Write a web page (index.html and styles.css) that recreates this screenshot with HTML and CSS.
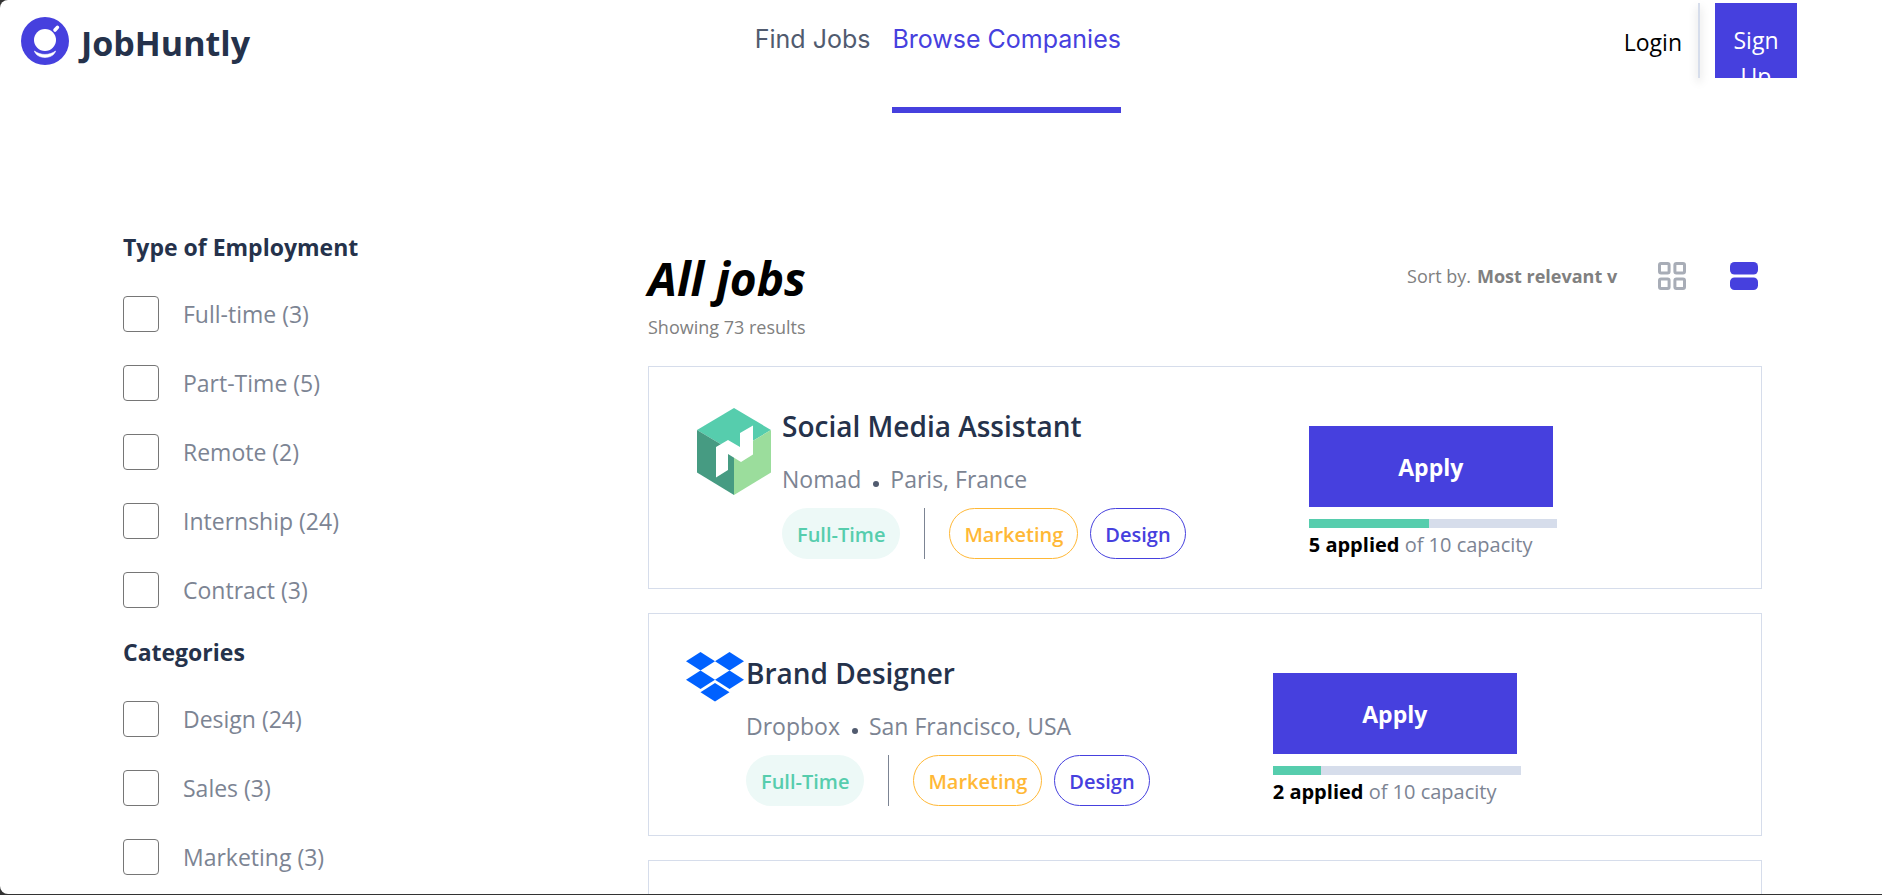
FILE: index.html
```html
<!DOCTYPE html>
<html lang="en">
<head>
<meta charset="utf-8">
<title>JobHuntly</title>
<meta name="viewport" content="width=device-width, initial-scale=1">
<link rel="stylesheet" href="styles.css">
</head>
<body>
<div class="page">
  <header class="header">
    <a class="brand" href="#">
      <svg class="brand-mark" viewBox="0 0 48 48" aria-hidden="true">
        <circle cx="24" cy="24" r="24" fill="#4640de"/>
        <circle cx="24" cy="23" r="11" fill="#fff"/>
        <path d="M34 13L36.400 10.400" stroke="#fff" stroke-width="3.600" stroke-linecap="round"/>
        <path d="M13.400 34C19.500 38.600 28.500 38.600 34.600 34C32 42.600 16 42.600 13.400 34Z" fill="#fff" stroke="#fff" stroke-width=".6" stroke-linejoin="round"/>
      </svg>
      <span class="brand-name">JobHuntly</span>
    </a>
    <nav class="nav">
      <a class="nav-link" href="#">Find Jobs</a>
      <a class="nav-link nav-link-active" href="#">Browse Companies</a>
    </nav>
    <div class="account">
      <a class="login" href="#">Login</a>
      <span class="account-divider"></span>
      <a class="signup" href="#">Sign Up</a>
    </div>
  </header>

  <div class="layout">
    <aside class="filters">
      <fieldset class="filter-group">
        <legend class="filter-title">Type of Employment</legend>
        <label class="option"><input class="option-box" type="checkbox">Full-time (3)</label>
        <label class="option"><input class="option-box" type="checkbox">Part-Time (5)</label>
        <label class="option"><input class="option-box" type="checkbox">Remote (2)</label>
        <label class="option"><input class="option-box" type="checkbox">Internship (24)</label>
        <label class="option"><input class="option-box" type="checkbox">Contract (3)</label>
      </fieldset>
      <fieldset class="filter-group">
        <legend class="filter-title">Categories</legend>
        <label class="option"><input class="option-box" type="checkbox">Design (24)</label>
        <label class="option"><input class="option-box" type="checkbox">Sales (3)</label>
        <label class="option"><input class="option-box" type="checkbox">Marketing (3)</label>
      </fieldset>
    </aside>

    <main class="jobs">
      <div class="jobs-head">
        <div>
          <h1 class="jobs-title">All jobs</h1>
          <p class="jobs-count">Showing 73 results</p>
        </div>
        <div class="tools">
          <div class="sort">
            <label for="sort">Sort by.</label>
            <select class="sort-select" id="sort"><option>Most relevant v</option></select>
          </div>
          <button class="view" type="button" aria-label="Grid view">
            <svg viewBox="0 0 28 28" fill="none" stroke="#a8adb7" stroke-width="3">
              <rect x="1.500" y="1.500" width="9.600" height="9.600" rx="1.500"/>
              <rect x="16.900" y="1.500" width="9.600" height="9.600" rx="1.500"/>
              <rect x="1.500" y="16.900" width="9.600" height="9.600" rx="1.500"/>
              <rect x="16.900" y="16.900" width="9.600" height="9.600" rx="1.500"/>
            </svg>
          </button>
          <button class="view" type="button" aria-label="List view">
            <svg viewBox="0 0 28 28" fill="#4640de">
              <rect width="28" height="12.600" rx="4.500"/>
              <rect y="15.400" width="28" height="12.600" rx="4.500"/>
            </svg>
          </button>
        </div>
      </div>

      <article class="card">
        <div class="logo logo-wide">
          <svg class="logo-nomad" viewBox="0 0 74 87" aria-hidden="true">
            <path d="M37 0L74 22L37 44L0 22Z" fill="#56cdad"/>
            <path d="M0 22L37 44V87L0 64.500Z" fill="#469b82"/>
            <path d="M74 22L37 44V87L74 64.500Z" fill="#9bdd9c"/>
            <path d="M19 39L31 32L43 39V25L56 17.500V46.500L44 54L31 46V62L19 69.500Z" fill="#fff"/>
          </svg>
        </div>
        <div class="info">
          <h2 class="job-title">Social Media Assistant</h2>
          <p class="job-meta">Nomad<span class="dot"></span>Paris, France</p>
          <div class="tags">
            <span class="tag tag-green">Full-Time</span>
            <span class="tag-divider"></span>
            <span class="tag tag-amber">Marketing</span>
            <span class="tag tag-indigo">Design</span>
          </div>
        </div>
        <div class="action">
          <button class="apply" type="button">Apply</button>
          <div class="capacity"><div class="capacity-fill" style="width:48.400%"></div></div>
          <p class="applied"><strong>5 applied</strong> of 10 capacity</p>
        </div>
      </article>

      <article class="card">
        <div class="logo">
          <svg class="logo-dropbox" viewBox="0 0 58 50" fill="#0061ff" aria-hidden="true">
            <path d="M14.500 0L29 9.250L14.500 18.500L0 9.250Z"/>
            <path d="M43.500 0L58 9.250L43.500 18.500L29 9.250Z"/>
            <path d="M14.500 18.500L29 27.750L14.500 37L0 27.750Z"/>
            <path d="M43.500 18.500L58 27.750L43.500 37L29 27.750Z"/>
            <path d="M29 31L43.500 40.250L29 49.500L14.500 40.250Z"/>
          </svg>
        </div>
        <div class="info">
          <h2 class="job-title">Brand Designer</h2>
          <p class="job-meta">Dropbox<span class="dot"></span>San Francisco, USA</p>
          <div class="tags">
            <span class="tag tag-green">Full-Time</span>
            <span class="tag-divider"></span>
            <span class="tag tag-amber">Marketing</span>
            <span class="tag tag-indigo">Design</span>
          </div>
        </div>
        <div class="action">
          <button class="apply" type="button">Apply</button>
          <div class="capacity"><div class="capacity-fill" style="width:19.400%"></div></div>
          <p class="applied"><strong>2 applied</strong> of 10 capacity</p>
        </div>
      </article>

      <article class="card"></article>
    </main>
  </div>
</div>
</body>
</html>
```
FILE: styles.css
```css
* {
  box-sizing: border-box;
}

body {
  margin: 0;
  background: #333;
  font-family: "Open Sans", "Noto Sans", sans-serif;
  font-size: 23px;
  line-height: 36px;
  color: #7c8493;
}

h1, h2, p, fieldset {
  margin: 0;
}

a {
  color: inherit;
  text-decoration: none;
}

button, select {
  font: inherit;
  color: inherit;
  border: 0;
  padding: 0;
  background: none;
}

.page {
  height: calc(100vh - 1px);
  overflow: hidden;
  background: #fff;
  border-radius: 8px 0 0 8px;
}

/* Header */

.header {
  display: flex;
  align-items: flex-start;
  padding-right: 85px;
}

.brand {
  display: flex;
  flex: 0 0 42%;
  gap: 12px;
  padding: 17px 0 0 21px;
}

.brand-mark {
  width: 48px;
  height: 48px;
}

.brand-name {
  padding-top: 2px;
  color: #25324b;
  font-size: 34px;
  font-weight: 700;
  line-height: 48px;
}

.nav {
  display: flex;
  gap: 22px;
  font-family: Inter, sans-serif;
  font-size: 25px;
  color: #515b6f;
}

.nav-link {
  height: 113px;
  padding-top: 21px;
  border-bottom: 6px solid transparent;
}

.nav-link-active {
  color: #4640de;
  border-bottom-color: #4640de;
}

.account {
  display: flex;
  margin: 3px 0 0 auto;
}

.login {
  padding: 21px 16px 0 0;
  color: #000;
}

.account-divider {
  width: 2px;
  height: 75px;
  margin-right: 15px;
  background: #d6ddeb;
  box-shadow: 0 4px 8px rgba(0, 0, 0, 0.25);
}

.signup {
  width: 82px;
  height: 75px;
  padding: 19px 16px 0;
  overflow: hidden;
  background: #4640de;
  color: #fff;
  text-align: center;
}

/* Filters */

.layout {
  display: flex;
  padding: 116px 120px 0 123px;
}

.filters {
  flex: 0 0 525px;
}

.filter-group {
  padding: 0 0 26px;
  border: 0;
}

.filter-title {
  padding: 0 0 31px;
  color: #25324b;
  font-weight: 700;
}

.option {
  display: flex;
  align-items: center;
  gap: 24px;
  margin-bottom: 33px;
}

.option:last-child {
  margin-bottom: 0;
}

.option-box {
  appearance: none;
  width: 36px;
  height: 36px;
  margin: 0;
  border: 1px solid #767676;
  border-radius: 4px;
}

.option-box:checked {
  background: #4640de;
}

/* Job list */

.jobs {
  flex: 1;
  min-width: 0;
}

.jobs-head {
  display: flex;
  justify-content: space-between;
  padding: 18px 4px 21px 0;
  color: #808080;
  font-size: 18px;
}

.jobs-title {
  color: #000;
  font-size: 46px;
  font-style: italic;
  font-weight: 700;
  line-height: 62px;
}

.tools {
  display: flex;
  align-items: center;
  gap: 44px;
  height: 58px;
}

.sort {
  display: flex;
  gap: 6px;
  margin-right: -4px;
}

.sort-select {
  appearance: none;
  font-weight: 700;
}

.view {
  display: flex;
  width: 28px;
  height: 28px;
}

.card {
  display: flex;
  height: 223px;
  margin-bottom: 24px;
  padding-left: 37px;
  border: 1px solid #d6ddeb;
}

.logo {
  flex: none;
  width: 60px;
  padding-top: 38px;
}

.logo-wide {
  width: 96px;
  padding: 41px 0 0 11px;
}

.logo-nomad {
  width: 74px;
  height: 87px;
}

.logo-dropbox {
  width: 58px;
  height: 50px;
}

.info {
  flex: 0 0 49%;
  padding-top: 40px;
}

.job-title {
  color: #25324b;
  font-size: 28px;
  font-weight: 600;
  line-height: 38px;
}

.job-meta {
  display: flex;
  align-items: center;
  padding: 16px 0 11px;
}

.dot {
  width: 6px;
  height: 6px;
  margin: 10px 11px 0 12px;
  border-radius: 50%;
  background: #515b6f;
}

.tags {
  display: flex;
  gap: 12px;
  font-size: 20px;
  font-weight: 600;
}

.tag {
  height: 51px;
  padding: 8px 14px 0;
  border: 1px solid;
  border-radius: 26px;
}

.tag-green {
  border-color: transparent;
  background: #edf9f7;
  color: #56cdad;
}

.tag-amber {
  color: #ffb836;
  border-color: #ffb836;
}

.tag-indigo {
  color: #4640de;
  border-color: #4640de;
}

.tag-divider {
  width: 1px;
  margin: 0 12px;
  background: #7c8493;
}

.action {
  width: 248px;
  padding-top: 59px;
  font-size: 20px;
  line-height: 34px;
}

.apply {
  display: block;
  width: 244px;
  height: 81px;
  background: #4640de;
  color: #fff;
  font-size: 23px;
  font-weight: 700;
}

.capacity {
  height: 9px;
  margin-top: 12px;
  background: #d6ddeb;
}

.capacity-fill {
  height: 100%;
  background: #56cdad;
}

.applied strong {
  color: #000;
}
```
